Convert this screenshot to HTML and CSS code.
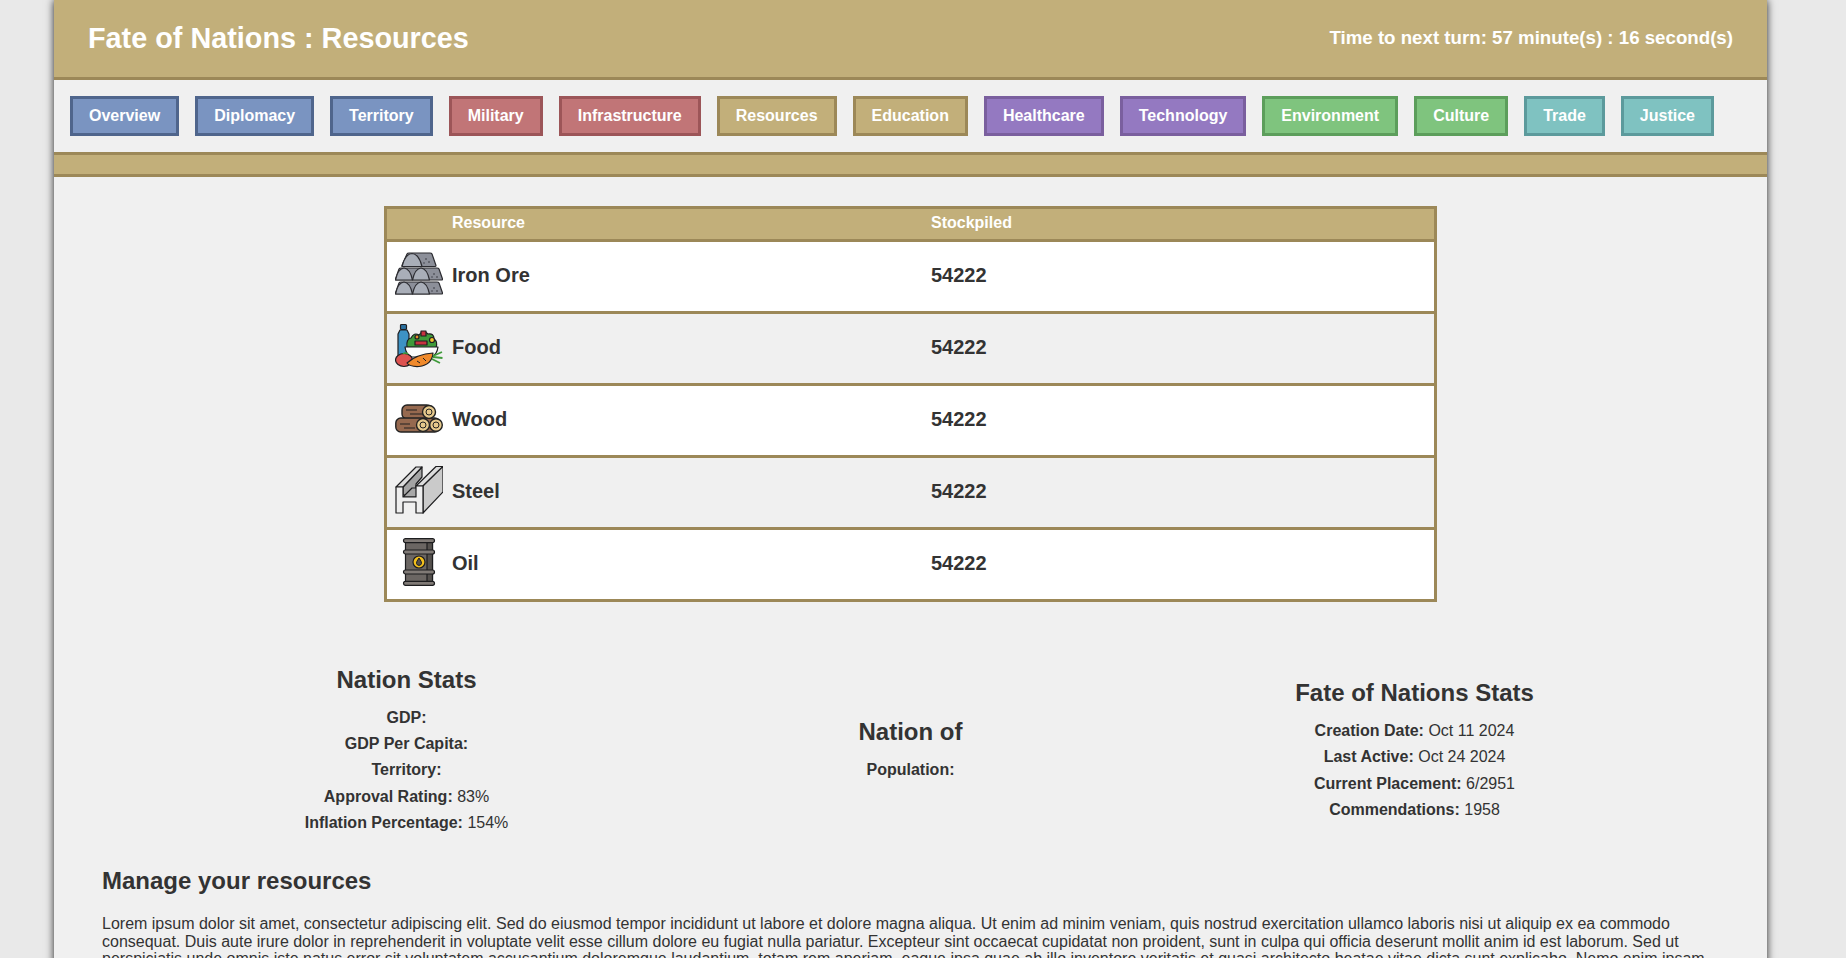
FILE: index.html
```html
<!DOCTYPE html>
<html lang="en">
<head>
    <meta charset="UTF-8">
    <meta name="viewport" content="width=device-width, initial-scale=1.0">
    <title>Fate of Nations : Resources</title>
    <link rel="stylesheet" href="styles.css">
</head>
<body>
    <div class="container">
        <header class="top-bar">
            <h1>Fate of Nations : Resources</h1>
            <div class="turn-timer">Time to next turn: 57 minute(s) : 16 second(s)</div>
        </header>

        <nav class="main-nav">
            <a class="nav-btn blue" href="#">Overview</a>
            <a class="nav-btn blue" href="#">Diplomacy</a>
            <a class="nav-btn blue" href="#">Territory</a>
            <a class="nav-btn red" href="#">Military</a>
            <a class="nav-btn red" href="#">Infrastructure</a>
            <a class="nav-btn tan" href="#">Resources</a>
            <a class="nav-btn tan" href="#">Education</a>
            <a class="nav-btn purple" href="#">Healthcare</a>
            <a class="nav-btn purple" href="#">Technology</a>
            <a class="nav-btn green" href="#">Environment</a>
            <a class="nav-btn green" href="#">Culture</a>
            <a class="nav-btn teal" href="#">Trade</a>
            <a class="nav-btn teal" href="#">Justice</a>
        </nav>

        <div class="sub-bar"></div>

        <main class="content">
            <table class="resource-table">
                <thead>
                    <tr>
                        <th class="icon-col"></th>
                        <th class="name-col">Resource</th>
                        <th>Stockpiled</th>
                    </tr>
                </thead>
                <tbody>
                    <tr>
                        <td class="icon-cell">
                            <svg class="res-icon" viewBox="0 0 48 48">
                                <g stroke="#2c2c31" stroke-width="1.2" stroke-linejoin="round">
                                    <path d="M12 4 Q12.500 3 14 3 H35 Q36.500 3 37 4 L41 15.500 Q41 16.500 40 16.500 H8 Q7 16.500 7 15.500 Z" fill="#8c8f99"/>
                                    <path d="M7 16.500 Q10 4 17 3.500 Q24 4 27 16.500 Z" fill="#a9aeb8"/>
                                    <path d="M4 19 Q4.500 18 6 18 H42 Q43.500 18 44 19 L47.500 29 Q47.500 30 46.500 30 H1.500 Q0.500 30 0.500 29 Z" fill="#8c8f99"/>
                                    <path d="M0.500 30 Q3 18.500 9 18 Q15 18.500 17.500 30 Z" fill="#a9aeb8"/>
                                    <path d="M17.500 30 Q20 18.500 26 18 Q32 18.500 34.500 30 Z" fill="#a9aeb8"/>
                                    <path d="M4 33 Q4.500 32 6 32 H42 Q43.500 32 44 33 L47.500 43 Q47.500 44 46.500 44 H1.500 Q0.500 44 0.500 43 Z" fill="#8c8f99"/>
                                    <path d="M0.500 44 Q3 32.500 9 32 Q15 32.500 17.500 44 Z" fill="#a9aeb8"/>
                                    <path d="M17.500 44 Q20 32.500 26 32 Q32 32.500 34.500 44 Z" fill="#a9aeb8"/>
                                </g>
                                <g fill="#33343a">
                                    <circle cx="31" cy="9" r=".8"/><circle cx="34" cy="12" r=".8"/><circle cx="29" cy="13" r=".7"/>
                                    <circle cx="39" cy="24" r=".8"/><circle cx="42" cy="27" r=".8"/><circle cx="37" cy="27" r=".7"/>
                                    <circle cx="39" cy="38" r=".8"/><circle cx="42" cy="41" r=".8"/><circle cx="37" cy="41" r=".7"/>
                                </g>
                            </svg>
                        </td>
                        <td>Iron Ore</td>
                        <td>54222</td>
                    </tr>
                    <tr>
                        <td class="icon-cell">
                            <svg class="res-icon" viewBox="0 0 48 48">
                                <g stroke="#1f1f22" stroke-width="1.2" stroke-linejoin="round">
                                    <rect x="5.500" y="2.500" width="6" height="5" rx="1" fill="#2a6f9e"/>
                                    <path d="M5 8 H12 L14 12 V34 H3 V12 Z" fill="#3d92c4"/>
                                    <path d="M12 25 Q11 17 16 16 Q19 10 24 13 Q28 7 33 12 Q39 11 39 17 Q43 19 41 26 Z" fill="#3f9a3a"/>
                                    <rect x="26" y="9" width="5" height="5" fill="#c8323f"/>
                                    <rect x="20" y="19" width="12" height="4" fill="#c8323f"/>
                                    <circle cx="37" cy="18" r="2.500" fill="#f2c22e"/>
                                    <circle cx="22" cy="15" r="2" fill="#e88a2e"/>
                                    <path d="M10 25 H43 Q42 33 36 35 H17 Q11 33 10 25 Z" fill="#fbfbfb"/>
                                    <ellipse cx="9" cy="38" rx="8.500" ry="6.500" fill="#dd5250"/>
                                    <path d="M8 32 Q10 30 13 32" fill="none" stroke="#3f9a3a" stroke-width="1.600"/>
                                    <path d="M38 31 Q22 32 12 41 Q15 45 24 44.500 Q37 43 38 31 Z" fill="#f08a2c"/>
                                    <path d="M22 39 L25 41 M28 36 L31 39" fill="none" stroke-width="1"/>
                                    <path d="M38 34 L47 30 M38 35 L47.500 36 M37 37 L45 41" stroke="#3f9a3a" stroke-width="1.800" fill="none"/>
                                </g>
                            </svg>
                        </td>
                        <td>Food</td>
                        <td>54222</td>
                    </tr>
                    <tr>
                        <td class="icon-cell">
                            <svg class="res-icon" viewBox="0 0 48 48">
                                <g stroke="#222" stroke-width="1.4">
                                    <rect x="7" y="11" width="30" height="14" rx="5" fill="#96694f"/>
                                    <rect x="0.800" y="24" width="44" height="14" rx="5" fill="#96694f"/>
                                    <path d="M11 16 H22 M15 20 H29 M5 30 H15 M9 34 H20" fill="none" stroke-width="1"/>
                                    <circle cx="34" cy="18" r="6.500" fill="#e6c98c"/>
                                    <circle cx="28" cy="31" r="6.500" fill="#e6c98c"/>
                                    <circle cx="41" cy="31" r="6.300" fill="#e6c98c"/>
                                    <g fill="none" stroke-width="1">
                                        <circle cx="34" cy="18" r="3"/>
                                        <circle cx="28" cy="31" r="3"/>
                                        <circle cx="41" cy="31" r="3"/>
                                    </g>
                                </g>
                            </svg>
                        </td>
                        <td>Wood</td>
                        <td>54222</td>
                    </tr>
                    <tr>
                        <td class="icon-cell">
                            <svg class="res-icon" viewBox="0 0 48 48">
                                <g stroke="#1d1d1f" stroke-width="1.2" stroke-linejoin="round">
                                    <path d="M8 21 L27 1 V11 L21 18 V29 H8 Z" fill="#a3a3a3"/>
                                    <path d="M1 21 L21 1 H27 L8 21 Z" fill="#dcdcdc"/>
                                    <path d="M8 31 H21 L30 22 H17 Z" fill="#a8a8a8"/>
                                    <path d="M21 20 L41 0.500 H48 L28 20 Z" fill="#dcdcdc"/>
                                    <path d="M28 20 L48 0.500 V26 L28 47 Z" fill="#cacaca"/>
                                    <path d="M1 21 H8 V31 H21 V20 H28 V47 H21 V36 H8 V47 H1 Z" fill="#eeeeee"/>
                                </g>
                            </svg>
                        </td>
                        <td>Steel</td>
                        <td>54222</td>
                    </tr>
                    <tr>
                        <td class="icon-cell">
                            <svg class="res-icon" viewBox="0 0 48 48">
                                <g stroke="#1d1d1f" stroke-width="1.200">
                                    <rect x="10.500" y="3" width="27" height="42" fill="#6b6663"/>
                                    <rect x="32" y="3" width="5.500" height="42" fill="#55514e"/>
                                    <rect x="8.500" y="0.700" width="31" height="4" rx="2" fill="#807a76"/>
                                    <rect x="8.500" y="12" width="31" height="4" rx="2" fill="#807a76"/>
                                    <rect x="8.500" y="32" width="31" height="4" rx="2" fill="#807a76"/>
                                    <rect x="8.500" y="43.300" width="31" height="4" rx="2" fill="#807a76"/>
                                    <circle cx="24" cy="24" r="6" fill="#f2bf1d"/>
                                    <path d="M24 20 Q27 24 26.500 25.500 A2.600 2.600 0 0 1 21.500 25.500 Q21 24 24 20 Z" fill="#55504c" stroke-width="1"/>
                                </g>
                            </svg>
                        </td>
                        <td>Oil</td>
                        <td>54222</td>
                    </tr>
                </tbody>
            </table>

            <section class="stats-row">
                <div class="stats-col">
                    <h3>Nation Stats</h3>
                    <p><b>GDP:</b></p>
                    <p><b>GDP Per Capita:</b></p>
                    <p><b>Territory:</b></p>
                    <p><b>Approval Rating:</b> 83%</p>
                    <p><b>Inflation Percentage:</b> 154%</p>
                </div>
                <div class="stats-col">
                    <h3>Nation of</h3>
                    <p><b>Population:</b></p>
                </div>
                <div class="stats-col">
                    <h3>Fate of Nations Stats</h3>
                    <p><b>Creation Date:</b> Oct 11 2024</p>
                    <p><b>Last Active:</b> Oct 24 2024</p>
                    <p><b>Current Placement:</b> 6/2951</p>
                    <p><b>Commendations:</b> 1958</p>
                </div>
            </section>

            <section class="manage">
                <h2>Manage your resources</h2>
                <p>Lorem ipsum dolor sit amet, consectetur adipiscing elit. Sed do eiusmod tempor incididunt ut labore et dolore magna aliqua. Ut enim ad minim veniam, quis nostrud exercitation ullamco laboris nisi ut aliquip ex ea commodo consequat. Duis aute irure dolor in reprehenderit in voluptate velit esse cillum dolore eu fugiat nulla pariatur. Excepteur sint occaecat cupidatat non proident, sunt in culpa qui officia deserunt mollit anim id est laborum. Sed ut perspiciatis unde omnis iste natus error sit voluptatem accusantium doloremque laudantium, totam rem aperiam, eaque ipsa quae ab illo inventore veritatis et quasi architecto beatae vitae dicta sunt explicabo. Nemo enim ipsam voluptatem quia voluptas sit aspernatur aut odit aut fugit, sed quia consequuntur magni dolores eos qui ratione voluptatem sequi nesciunt.</p>
            </section>
        </main>
    </div>
</body>
</html>
```

FILE: styles.css
```css
html, body {
    height: 100vh;
    overflow: hidden;
}
body {
    font-family: 'Liberation Sans', Arial, sans-serif;
    background-color: #e9e9e9;
    color: #333333;
    margin: 0;
}
.container {
    width: 1713px;
    min-height: 100vh;
    margin-left: 54px;
    background-color: #f0f0f0;
    box-shadow: 0 0 8px rgba(0, 0, 0, 0.85);
}

/* header */
.top-bar {
    display: flex;
    justify-content: space-between;
    align-items: center;
    height: 77px;
    padding: 0 34px;
    background-color: #c2af7a;
    border-bottom: 3px solid #9c8858;
    color: #ffffff;
}
.top-bar h1 {
    font-size: 28.8px;
    margin: 0;
}
.turn-timer {
    font-size: 18.7px;
    font-weight: bold;
    margin-bottom: 2px;
}

/* nav */
.main-nav {
    display: flex;
    gap: 16px;
    padding: 16px;
}
.nav-btn {
    display: flex;
    align-items: center;
    height: 40px;
    box-sizing: border-box;
    padding: 0 16px 1px;
    border: 3px solid;
    color: #ffffff;
    font-size: 16px;
    font-weight: bold;
    text-decoration: none;
}
.blue { background-color: #7a94c1; border-color: #4f658c; }
.red { background-color: #c17577; border-color: #9c5558; }
.tan { background-color: #c2af7a; border-color: #9c8858; }
.purple { background-color: #9479c1; border-color: #7a5f9e; }
.green { background-color: #7fc47e; border-color: #5c9e5b; }
.teal { background-color: #7fc2c1; border-color: #5c9a9c; }

.sub-bar {
    height: 19px;
    background-color: #c2af7a;
    border-top: 3px solid #9c8858;
    border-bottom: 3px solid #9c8858;
}

.content {
    padding: 29px 48px 0;
}

/* resource table */
.resource-table {
    width: 1053px;
    margin: 0 auto;
    table-layout: fixed;
    border-collapse: separate;
    border-spacing: 0;
    border: 3px solid #9c8858;
    font-size: 20px;
    font-weight: bold;
}
.resource-table th {
    height: 28px;
    padding: 0 0 2px;
    background-color: #c2af7a;
    border-bottom: 3px solid #9c8858;
    color: #ffffff;
    font-size: 16px;
    text-align: left;
}
.icon-col {
    width: 65px;
}
.name-col {
    width: 479px;
}
.resource-table td {
    padding: 0 0 2px;
    border-bottom: 3px solid #9c8858;
    background-color: #ffffff;
}
.resource-table tbody tr:nth-child(even) td {
    background-color: #f0f0f0;
}
.resource-table tbody tr:last-child td {
    border-bottom: none;
}
.resource-table td.icon-cell {
    padding: 8px 0 13px 8px;
    vertical-align: top;
}
.res-icon {
    display: block;
    width: 48px;
    height: 48px;
}

/* stats */
.stats-row {
    display: grid;
    grid-template-columns: repeat(3, 504px);
    justify-content: center;
    align-items: center;
    margin-top: 64px;
    text-align: center;
}
.stats-col h3 {
    font-size: 24px;
    line-height: 28px;
    margin: 0 0 11px;
}
.stats-col p {
    font-size: 16px;
    line-height: 26.2px;
    margin: 0;
}

.manage {
    margin-top: 31px;
}
.manage h2 {
    font-size: 24px;
    line-height: 28px;
    margin: 0 0 20px;
}
.manage p {
    font-size: 16px;
    line-height: 17.6px;
    margin: 0;
}
```
